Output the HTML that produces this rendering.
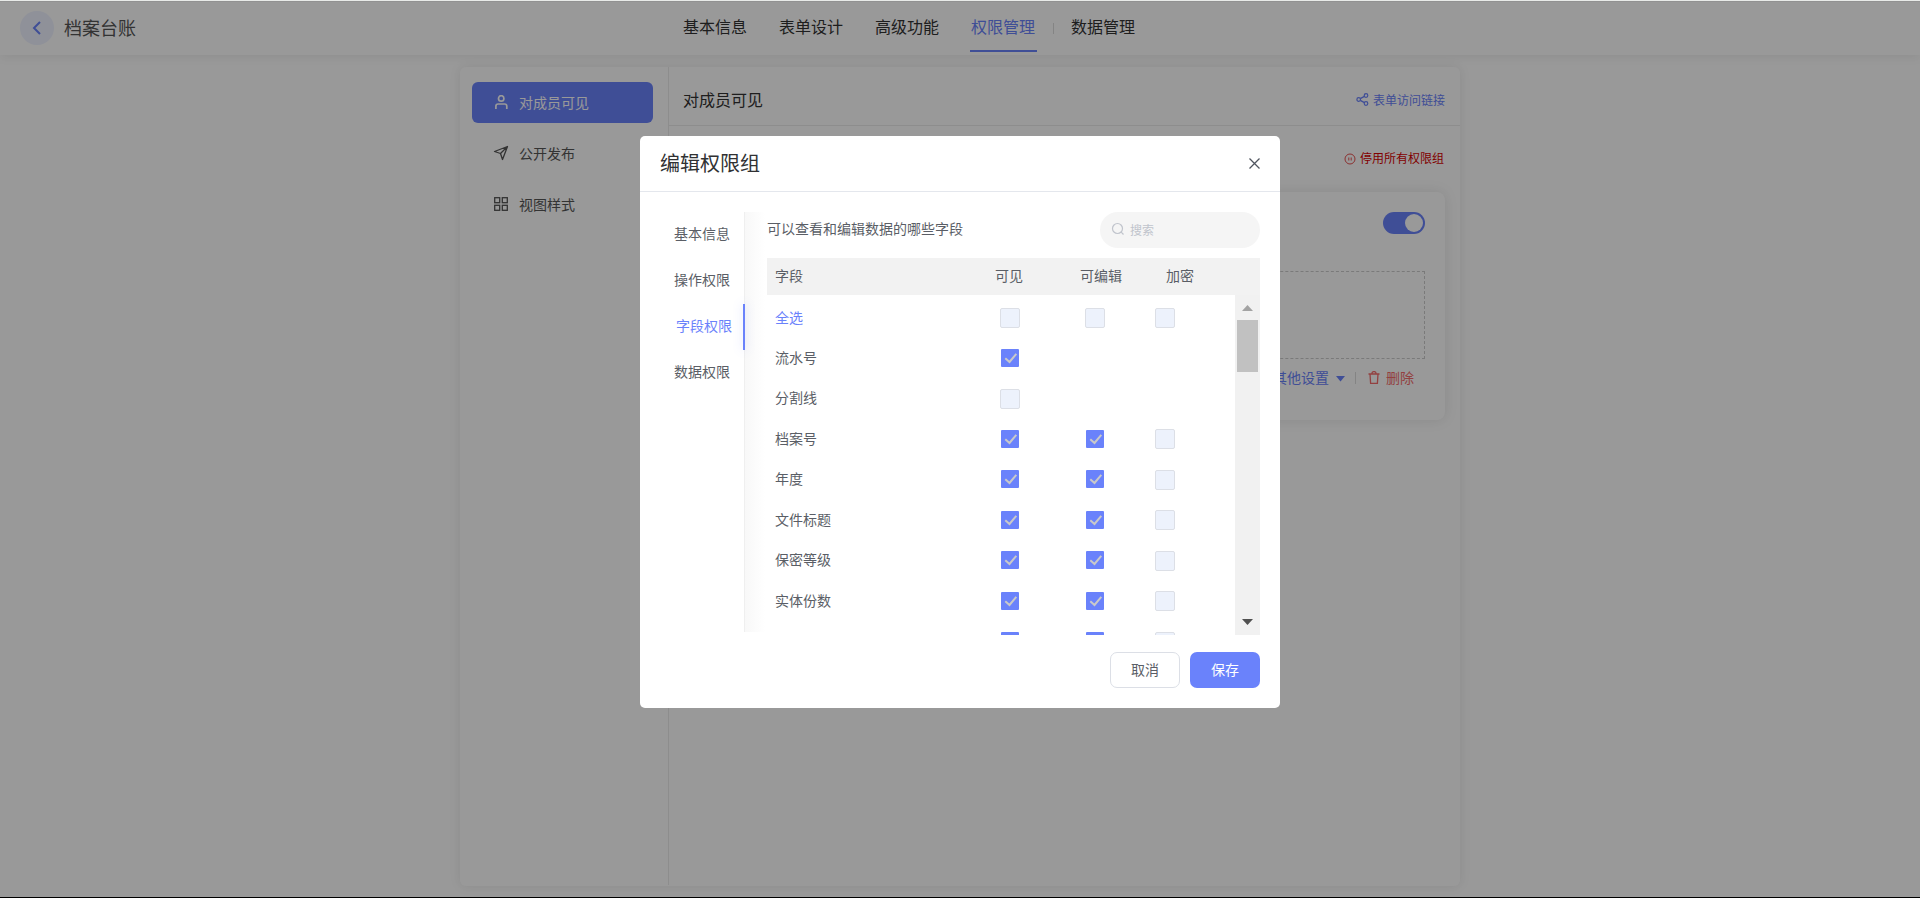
<!DOCTYPE html>
<html lang="zh-CN">
<head>
<meta charset="utf-8">
<style>
*{box-sizing:border-box;margin:0;padding:0}
html,body{width:1920px;height:898px;overflow:hidden}
body{position:relative;background:#fff;font-family:"Liberation Sans",sans-serif;color:#333}
.abs{position:absolute}
.t{position:absolute;white-space:nowrap;line-height:1}
#hdr{position:absolute;left:0;top:0;width:1920px;height:55px;background:#fff;box-shadow:0 2px 10px rgba(0,0,0,.07)}
#panel{position:absolute;left:460px;top:67px;width:1000px;height:819px;background:#fff;border-radius:6px;box-shadow:0 0 12px rgba(0,0,0,.09)}
#overlay{position:absolute;left:0;top:0;width:1920px;height:898px;background:rgba(0,0,0,.4)}
#modal{position:absolute;left:640px;top:136px;width:640px;height:572px;background:#fff;border-radius:5px}
.cb{position:absolute;width:20px;height:20px;border:1px solid #dcdfe6;background:#edf2fc;border-radius:2px}
.cb.on{width:18px;height:18px;background:#6a82fb;border:none;border-radius:1px}
.cb.on svg{position:absolute;left:0;top:0}
.rt{font-size:14px;color:#5a5e66}
.sel{color:#6a82fb}
</style>
</head>
<body>
<div id="hdr">
  <div class="abs" style="left:20px;top:11px;width:34px;height:34px;border-radius:50%;background:#eef2ff"></div>
  <svg class="abs" style="left:30px;top:20px" width="14" height="16" viewBox="0 0 14 16"><path d="M10 2 L4 8 L10 14" fill="none" stroke="#6a82fb" stroke-width="2"/></svg>
  <div class="t" style="left:64px;top:20px;font-size:18px;color:#555">档案台账</div>
  <div class="t" style="left:683px;top:20px;font-size:16px;color:#333">基本信息</div>
  <div class="t" style="left:779px;top:20px;font-size:16px;color:#333">表单设计</div>
  <div class="t" style="left:875px;top:20px;font-size:16px;color:#333">高级功能</div>
  <div class="t" style="left:971px;top:20px;font-size:16px;color:#6a82fb">权限管理</div>
  <div class="abs" style="left:970px;top:50px;width:67px;height:2px;background:#6a82fb"></div>
  <div class="abs" style="left:1053px;top:23px;width:1px;height:11px;background:#ddd"></div>
  <div class="t" style="left:1071px;top:20px;font-size:16px;color:#333">数据管理</div>
</div>

<div id="panel">
  <div class="abs" style="left:208px;top:0;width:1px;height:818px;background:#ebebeb"></div>
  <div class="abs" style="left:12px;top:15px;width:181px;height:41px;border-radius:6px;background:#6a82fb"></div>
  <svg class="abs" style="left:34px;top:28px" width="14" height="14" viewBox="0 0 14 14"><circle cx="7.2" cy="3.4" r="2.7" fill="none" stroke="#fff" stroke-width="1.7"/><path d="M1.9 14 V11.2 Q1.9 9 4.1 9 H10.6 Q12.8 9 12.8 11.2 V14" fill="none" stroke="#fff" stroke-width="1.7"/></svg>
  <div class="t" style="left:59px;top:29px;font-size:14px;color:#fff">对成员可见</div>
  <svg class="abs" style="left:33px;top:78px" width="16" height="16" viewBox="0 0 16 16"><path d="M1.5 6.5 L14.5 1.5 L9.5 14.5 L7.5 8.5 Z M7.5 8.5 L14.5 1.5" fill="none" stroke="#555" stroke-width="1.3" stroke-linejoin="round"/></svg>
  <div class="t" style="left:59px;top:80px;font-size:14px;color:#555">公开发布</div>
  <svg class="abs" style="left:34px;top:130px" width="14" height="14" viewBox="0 0 14 14"><rect x="0.7" y="0.7" width="5" height="5" fill="none" stroke="#555" stroke-width="1.3"/><rect x="8.3" y="0.7" width="5" height="5" fill="none" stroke="#555" stroke-width="1.3"/><rect x="0.7" y="8.3" width="5" height="5" fill="none" stroke="#555" stroke-width="1.3"/><rect x="8.3" y="8.3" width="5" height="5" fill="none" stroke="#555" stroke-width="1.3"/></svg>
  <div class="t" style="left:59px;top:131px;font-size:14px;color:#555">视图样式</div>
  <div class="t" style="left:223px;top:26px;font-size:16px;color:#333">对成员可见</div>
  <div class="abs" style="left:209px;top:58px;width:791px;height:1px;background:#ebebeb"></div>
  <svg class="abs" style="left:896px;top:26px" width="13" height="13" viewBox="0 0 13 13"><circle cx="10" cy="2.5" r="1.8" fill="none" stroke="#6a82fb" stroke-width="1.2"/><circle cx="2.7" cy="6.5" r="1.8" fill="none" stroke="#6a82fb" stroke-width="1.2"/><circle cx="10" cy="10.5" r="1.8" fill="none" stroke="#6a82fb" stroke-width="1.2"/><path d="M4.3 5.6 L8.4 3.4 M4.3 7.4 L8.4 9.6" stroke="#6a82fb" stroke-width="1.2"/></svg>
  <div class="t" style="left:913px;top:28px;font-size:12px;color:#6a82fb">表单访问链接</div>
  <svg class="abs" style="left:884px;top:86px" width="12" height="12" viewBox="0 0 12 12"><circle cx="6" cy="6" r="5" fill="none" stroke="#e85050" stroke-width="1"/><path d="M4.8 4.5 V7.5 M7.2 4.5 V7.5" stroke="#e85050" stroke-width="1"/></svg>
  <div class="t" style="left:900px;top:86px;font-size:12px;color:#d80000">停用所有权限组</div>
  <div class="abs" style="left:800px;top:125px;width:185px;height:228px;border-radius:8px;background:#fff;box-shadow:0 0 14px rgba(0,0,0,.1)"></div>
  <div class="abs" style="left:923px;top:145px;width:42px;height:22px;border-radius:11px;background:#6a82fb"></div>
  <div class="abs" style="left:945px;top:147px;width:18px;height:18px;border-radius:50%;background:#fff"></div>
  <div class="abs" style="left:800px;top:204px;width:165px;height:88px;border:1px dashed #ccc"></div>
  <div class="t" style="left:813px;top:304px;font-size:14px;color:#6a82fb">其他设置</div>
  <svg class="abs" style="left:876px;top:309px" width="9" height="6" viewBox="0 0 9 6"><path d="M0 0 H9 L4.5 5.5 Z" fill="#6a82fb"/></svg>
  <div class="abs" style="left:895px;top:305px;width:1px;height:12px;background:#ddd"></div>
  <svg class="abs" style="left:908px;top:304px" width="12" height="13" viewBox="0 0 12 13"><path d="M0.5 3 H11.5 M4 3 V2.2 A2 1.6 0 0 1 8 2.2 V3 M2 3 L2.6 12.3 H9.4 L10 3" fill="none" stroke="#f56c6c" stroke-width="1.3"/></svg>
  <div class="t" style="left:926px;top:304px;font-size:14px;color:#f56c6c">删除</div>
</div>

<div id="overlay"></div>
<div class="abs" style="left:0;top:0;width:1920px;height:1px;background:#e8eae8"></div>
<div class="abs" style="left:0;top:1px;width:1920px;height:1px;background:rgba(0,0,0,.05)"></div>
<div class="abs" style="left:0;top:897px;width:1920px;height:1px;background:#000"></div>

<div id="modal">
  <div class="t" style="left:20px;top:18px;font-size:20px;color:#303133">编辑权限组</div>
  <svg class="abs" style="left:608.5px;top:21.5px" width="11" height="11" viewBox="0 0 11 11"><path d="M0.5 0.5 L10.5 10.5 M10.5 0.5 L0.5 10.5" stroke="#50555f" stroke-width="1.3"/></svg>
  <div class="abs" style="left:0;top:55px;width:640px;height:1px;background:#e4e7ed"></div>

  <div class="t" style="left:34px;top:91px;font-size:14px;color:#5a5e66">基本信息</div>
  <div class="t" style="left:34px;top:137px;font-size:14px;color:#5a5e66">操作权限</div>
  <div class="t" style="left:36px;top:183px;font-size:14px;color:#6a82fb">字段权限</div>
  <div class="t" style="left:34px;top:229px;font-size:14px;color:#5a5e66">数据权限</div>
  <div class="abs" style="left:105px;top:76px;width:20px;height:420px;background:linear-gradient(90deg,#f8f8f8,#fff)"></div>
  <div class="abs" style="left:104px;top:76px;width:1px;height:420px;background:#efefef"></div>
  <div class="abs" style="left:103px;top:168px;width:2px;height:46px;background:#6a82fb;box-shadow:0 0 10px rgba(106,130,251,.35)"></div>

  <div class="t" style="left:127px;top:86px;font-size:14px;color:#5a5e66">可以查看和编辑数据的哪些字段</div>
  <div class="abs" style="left:460px;top:76px;width:160px;height:36px;border-radius:18px;background:#f5f5f5"></div>
  <svg class="abs" style="left:470.5px;top:85.5px" width="14" height="14" viewBox="0 0 14 14"><circle cx="6.5" cy="6.5" r="5" fill="none" stroke="#c0c4cc" stroke-width="1.2"/><path d="M10.2 10.2 L12.5 12.5" stroke="#c0c4cc" stroke-width="1.2"/></svg>
  <div class="t" style="left:490px;top:89px;font-size:12px;color:#c0c4cc">搜索</div>

  <div class="abs" style="left:127px;top:122px;width:493px;height:37px;background:#f2f2f2"></div>
  <div class="t" style="left:135px;top:133px;font-size:14px;color:#5a5e66">字段</div>
  <div class="t" style="left:355px;top:133px;font-size:14px;color:#5a5e66">可见</div>
  <div class="t" style="left:440px;top:133px;font-size:14px;color:#5a5e66">可编辑</div>
  <div class="t" style="left:526px;top:133px;font-size:14px;color:#5a5e66">加密</div>

  <div class="abs" style="left:127px;top:159px;width:468px;height:340px;overflow:hidden">
  <div class="abs" style="left:-127px;top:-159px;width:640px;height:800px">
    <div class="t rt sel" style="left:135px;top:174.55px">全选</div>
    <div class="cb" style="left:360px;top:172.05px"></div>
    <div class="cb" style="left:445px;top:172.05px"></div>
    <div class="cb" style="left:515px;top:172.05px"></div>
    <div class="t rt" style="left:135px;top:215.00px">流水号</div>
    <div class="cb on" style="left:361px;top:213.00px"><svg width="18" height="18" viewBox="0 0 18 18"><path d="M4.3 9.2 L8.5 13 L15.3 4.9" fill="none" stroke="#c9c9c9" stroke-width="2"/></svg></div>
    <div class="t rt" style="left:135px;top:255.45px">分割线</div>
    <div class="cb" style="left:360px;top:252.95px"></div>
    <div class="t rt" style="left:135px;top:295.90px">档案号</div>
    <div class="cb on" style="left:361px;top:293.90px"><svg width="18" height="18" viewBox="0 0 18 18"><path d="M4.3 9.2 L8.5 13 L15.3 4.9" fill="none" stroke="#c9c9c9" stroke-width="2"/></svg></div>
    <div class="cb on" style="left:446px;top:293.90px"><svg width="18" height="18" viewBox="0 0 18 18"><path d="M4.3 9.2 L8.5 13 L15.3 4.9" fill="none" stroke="#c9c9c9" stroke-width="2"/></svg></div>
    <div class="cb" style="left:515px;top:293.40px"></div>
    <div class="t rt" style="left:135px;top:336.35px">年度</div>
    <div class="cb on" style="left:361px;top:334.35px"><svg width="18" height="18" viewBox="0 0 18 18"><path d="M4.3 9.2 L8.5 13 L15.3 4.9" fill="none" stroke="#c9c9c9" stroke-width="2"/></svg></div>
    <div class="cb on" style="left:446px;top:334.35px"><svg width="18" height="18" viewBox="0 0 18 18"><path d="M4.3 9.2 L8.5 13 L15.3 4.9" fill="none" stroke="#c9c9c9" stroke-width="2"/></svg></div>
    <div class="cb" style="left:515px;top:333.85px"></div>
    <div class="t rt" style="left:135px;top:376.80px">文件标题</div>
    <div class="cb on" style="left:361px;top:374.80px"><svg width="18" height="18" viewBox="0 0 18 18"><path d="M4.3 9.2 L8.5 13 L15.3 4.9" fill="none" stroke="#c9c9c9" stroke-width="2"/></svg></div>
    <div class="cb on" style="left:446px;top:374.80px"><svg width="18" height="18" viewBox="0 0 18 18"><path d="M4.3 9.2 L8.5 13 L15.3 4.9" fill="none" stroke="#c9c9c9" stroke-width="2"/></svg></div>
    <div class="cb" style="left:515px;top:374.30px"></div>
    <div class="t rt" style="left:135px;top:417.25px">保密等级</div>
    <div class="cb on" style="left:361px;top:415.25px"><svg width="18" height="18" viewBox="0 0 18 18"><path d="M4.3 9.2 L8.5 13 L15.3 4.9" fill="none" stroke="#c9c9c9" stroke-width="2"/></svg></div>
    <div class="cb on" style="left:446px;top:415.25px"><svg width="18" height="18" viewBox="0 0 18 18"><path d="M4.3 9.2 L8.5 13 L15.3 4.9" fill="none" stroke="#c9c9c9" stroke-width="2"/></svg></div>
    <div class="cb" style="left:515px;top:414.75px"></div>
    <div class="t rt" style="left:135px;top:457.70px">实体份数</div>
    <div class="cb on" style="left:361px;top:455.70px"><svg width="18" height="18" viewBox="0 0 18 18"><path d="M4.3 9.2 L8.5 13 L15.3 4.9" fill="none" stroke="#c9c9c9" stroke-width="2"/></svg></div>
    <div class="cb on" style="left:446px;top:455.70px"><svg width="18" height="18" viewBox="0 0 18 18"><path d="M4.3 9.2 L8.5 13 L15.3 4.9" fill="none" stroke="#c9c9c9" stroke-width="2"/></svg></div>
    <div class="cb" style="left:515px;top:455.20px"></div>
    <div class="t rt" style="left:135px;top:499.15px">存放位置</div>
    <div class="cb on" style="left:361px;top:496.15px"><svg width="18" height="18" viewBox="0 0 18 18"><path d="M4.3 9.2 L8.5 13 L15.3 4.9" fill="none" stroke="#c9c9c9" stroke-width="2"/></svg></div>
    <div class="cb on" style="left:446px;top:496.15px"><svg width="18" height="18" viewBox="0 0 18 18"><path d="M4.3 9.2 L8.5 13 L15.3 4.9" fill="none" stroke="#c9c9c9" stroke-width="2"/></svg></div>
    <div class="cb" style="left:515px;top:495.65px"></div>
  </div>
  </div>
  <div class="abs" style="left:595px;top:159px;width:25px;height:340px;background:#f1f1f1"></div>
  <div class="abs" style="left:597px;top:184px;width:21px;height:52px;background:#c1c1c1"></div>
  <svg class="abs" style="left:602px;top:169px" width="11" height="6" viewBox="0 0 11 6"><path d="M0 6 L5.5 0 L11 6 Z" fill="#a3a3a3"/></svg>
  <svg class="abs" style="left:602px;top:483px" width="11" height="6" viewBox="0 0 11 6"><path d="M0 0 L5.5 6 L11 0 Z" fill="#505050"/></svg>

  <div class="abs" style="left:470px;top:516px;width:70px;height:36px;border:1px solid #dcdfe6;border-radius:7px;background:#fff"></div>
  <div class="t" style="left:491px;top:527px;font-size:14px;color:#5a5e66">取消</div>
  <div class="abs" style="left:550px;top:516px;width:70px;height:36px;border-radius:7px;background:#6a82fb"></div>
  <div class="t" style="left:571px;top:527px;font-size:14px;color:#fff">保存</div>
</div>
</body>
</html>
